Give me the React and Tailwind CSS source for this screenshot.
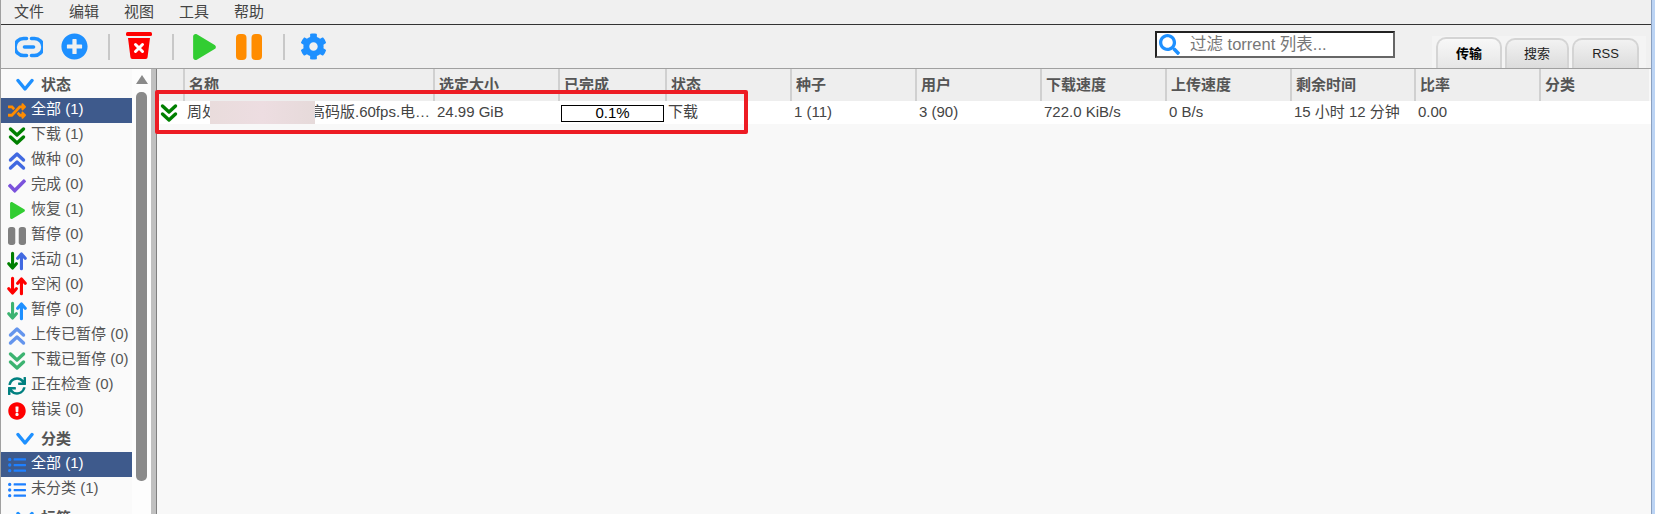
import React from 'react';
import {
  FaCheck,
  FaCog,
  FaExclamationCircle,
  FaListUl,
  FaPlay,
  FaPlusCircle,
  FaRandom,
  FaSearch,
  FaSync,
} from 'react-icons/fa';

const FONT = "font-['Liberation_Sans','Noto_Sans_CJK_SC',sans-serif]";
const COLS = 'grid grid-cols-[26px_250px_125px_107px_125px_125px_125px_125px_125px_124px_125px_110px]';

function DoubleChevron({ color, up, className = 'h-[20px] w-[18px]' }) {
  return (
    <svg viewBox="0 0 18 20" className={className} fill="none" stroke={color} strokeWidth="3.4" strokeLinecap="round" strokeLinejoin="round">
      {up ? <path d="M2.500 9 9 3l6.500 6M2.500 17 9 11l6.500 6" /> : <path d="M2.500 3 9 9l6.500-6M2.500 11 9 17l6.500-6" />}
    </svg>
  );
}

function Chevron() {
  return (
    <svg viewBox="0 0 18 14" className="mr-[7px] h-[14px] w-[18px]" fill="none" stroke="#1e90ff" strokeWidth="3.4" strokeLinecap="round" strokeLinejoin="round">
      <path d="M2 2.500 9 11l7-8.500" />
    </svg>
  );
}

function Pills({ color, className }) {
  return (
    <svg viewBox="0 0 26 26" className={className} fill={color}>
      <rect x="0" y="0" width="10.500" height="26" rx="4" />
      <rect x="15.500" y="0" width="10.500" height="26" rx="4" />
    </svg>
  );
}

function UpDown({ down, up }) {
  return (
    <svg viewBox="0 0 18 18" className="h-[20px] w-[20px]" fill="none" strokeWidth="2.8" strokeLinecap="round" strokeLinejoin="round">
      <path d="M5 2v13M1.600 11.400 5 15.400l3.400-4" stroke={down} />
      <path d="M13 16V3M9.600 6.600 13 2.600l3.400 4" stroke={up} />
    </svg>
  );
}

function LinkIcon() {
  return (
    <svg viewBox="0 0 28 24" className="h-[24px] w-[28px]" fill="none" stroke="#1e90ff" strokeWidth="3.600" strokeLinecap="round">
      <path d="M11.500 3.500H8.500a8.500 8.500 0 0 0 0 17h3" />
      <path d="M16.500 3.500h3a8.500 8.500 0 0 1 0 17h-3" />
      <path d="M9.500 12h9" />
    </svg>
  );
}

function TrashIcon() {
  return (
    <svg viewBox="0 0 26 27" className="h-[27px] w-[26px]">
      <rect x="0" y="0" width="26" height="4" rx="1.500" fill="#ff0000" />
      <path d="M2 6h22l-2.400 19a2 2 0 0 1-2 2H6.400a2 2 0 0 1-2-2z" fill="#ff0000" />
      <path d="M9.500 12.500l7 7M16.500 12.500l-7 7" stroke="#fff" strokeWidth="3" strokeLinecap="round" />
    </svg>
  );
}

function Separator() {
  return <div className="h-[26px] w-[2px] bg-[#c8c8c8]" />;
}

function SideRow({ icon, label, active }) {
  return (
    <div className={`flex h-[25px] items-center ${active ? 'bg-[#3e5a8c] text-white' : 'text-[#555]'}`}>
      <span className="flex w-[30px] shrink-0 justify-center pl-[2px]">{icon}</span>
      <span className="whitespace-nowrap pb-[2px]">{label}</span>
    </div>
  );
}

function SideHeader({ label }) {
  return (
    <div className="flex h-[29px] items-center pt-[3px] pl-[15px] font-bold text-[#555]">
      <Chevron />
      <span>{label}</span>
    </div>
  );
}

const statusRows = [
  { label: '全部 (1)', active: true, icon: <FaRandom className="h-[18px] w-[18px] text-[#ff8c00]" /> },
  { label: '下载 (1)', icon: <DoubleChevron color="#008000" /> },
  { label: '做种 (0)', icon: <DoubleChevron up color="#4169e1" /> },
  { label: '完成 (0)', icon: <FaCheck className="h-[18px] w-[18px] text-[#7b52dc]" /> },
  { label: '恢复 (1)', icon: <FaPlay className="h-[17px] w-[15px] text-[#32cd32]" /> },
  { label: '暂停 (0)', icon: <Pills color="#808080" className="h-[18px] w-[18px]" /> },
  { label: '活动 (1)', icon: <UpDown down="#008000" up="#4169e1" /> },
  { label: '空闲 (0)', icon: <UpDown down="#ff0000" up="#ff0000" /> },
  { label: '暂停 (0)', icon: <UpDown down="#3cb371" up="#1e90ff" /> },
  { label: '上传已暂停 (0)', icon: <DoubleChevron up color="#6495ed" /> },
  { label: '下载已暂停 (0)', icon: <DoubleChevron color="#3cb371" /> },
  { label: '正在检查 (0)', icon: <FaSync className="h-[18px] w-[18px] text-[#008080]" /> },
  { label: '错误 (0)', icon: <FaExclamationCircle className="h-[18px] w-[18px] text-[#ff0000]" /> },
];

const headers = ['名称', '选定大小', '已完成', '状态', '种子', '用户', '下载速度', '上传速度', '剩余时间', '比率', '分类'];
const tailCells = ['1 (11)', '3 (90)', '722.0 KiB/s', '0 B/s', '15 小时 12 分钟', '0.00', ''];

export default function App() {
  return (
    <div className={`relative flex h-[514px] w-[1655px] overflow-hidden bg-white text-[15px] ${FONT}`}>
      <div className="flex min-w-0 flex-1 flex-col border-r border-l border-r-[#8aa0c0] border-l-[#a0a0a0]">
        {/* menu */}
        <div className="flex h-[25px] shrink-0 items-center gap-[25px] border-b border-[#333] bg-[#f0f0f0] pl-[13px] text-[#444]">
          {['文件', '编辑', '视图', '工具', '帮助'].map((m) => (
            <span key={m}>{m}</span>
          ))}
        </div>

        {/* toolbar */}
        <div className="flex h-[44px] shrink-0 items-center border-b border-[#a0a0a0] bg-[#f0f0f0]">
          <div className="ml-[14px] flex items-center">
            <LinkIcon />
            <FaPlusCircle className="ml-[18px] h-[27px] w-[27px] text-[#1e90ff]" />
            <div className="ml-[20px]"><Separator /></div>
            <div className="ml-[16px] -mt-[2px]"><TrashIcon /></div>
            <div className="ml-[20px]"><Separator /></div>
            <FaPlay className="ml-[19px] h-[26px] w-[23px] text-[#32cd32]" />
            <Pills color="#ff8c00" className="ml-[20px] h-[26px] w-[26px]" />
            <div className="ml-[21px]"><Separator /></div>
            <FaCog className="ml-[15px] h-[27px] w-[27px] text-[#1e90ff]" />
          </div>
          <div className="ml-[828px] mt-[-5px] flex h-[27px] w-[240px] items-center border-2 border-t-[#222] border-r-[#666] border-b-[#666] border-l-[#222] bg-white pl-[2px] text-[16.5px] text-[#777]">
            <FaSearch className="h-[21px] w-[21px] text-[#1e90ff]" />
            <span className="ml-[10px]">过滤 torrent 列表...</span>
          </div>
          <div className="mt-[11px] ml-[37px] flex h-[32px] w-[214px] items-end gap-[3px] self-start bg-[#f4f4f4] pl-[4px] text-[13px] text-[#222]">
            <div className="flex h-[31px] w-[66px] items-center justify-center rounded-t-[10px] border-2 border-b-0 border-[#d4d4d4] bg-gradient-to-b from-[#f8f8f8] to-[#e6e6e6] font-bold text-black">
              传输
            </div>
            <div className="flex h-[30px] w-[64px] items-center justify-center rounded-t-[10px] border-2 border-b-0 border-[#d4d4d4] bg-gradient-to-b from-[#f2f2f2] to-[#dcdcdc]">
              搜索
            </div>
            <div className="flex h-[30px] w-[67px] items-center justify-center rounded-t-[10px] border-2 border-b-0 border-[#d4d4d4] bg-gradient-to-b from-[#f2f2f2] to-[#dcdcdc]">
              RSS
            </div>
          </div>
        </div>

        <div className="flex min-h-0 flex-1">
          {/* sidebar */}
          <div className="h-full w-[131px] shrink-0 overflow-hidden bg-[#fafafa]">
            <SideHeader label="状态" />
            {statusRows.map((r, i) => (
              <SideRow key={i} {...r} />
            ))}
            <SideHeader label="分类" />
            <SideRow active label="全部 (1)" icon={<FaListUl className="h-[18px] w-[18px] text-[#1e80ff]" />} />
            <SideRow label="未分类 (1)" icon={<FaListUl className="h-[18px] w-[18px] text-[#1e80ff]" />} />
            <SideHeader label="标签" />
          </div>

          {/* sidebar scrollbar */}
          <div className="w-[19px] shrink-0 bg-[#fdfdfd] pt-[6px] pl-[4px]">
            <div className="h-0 w-0 border-x-[6px] border-b-[9px] border-x-transparent border-b-[#8a8a8a]" />
            <div className="mt-[8px] h-[389px] w-[11px] rounded-[5px] bg-[#8a8a8a]" />
          </div>
          <div className="w-[6px] shrink-0 border-r border-[#808080] bg-[#c0c0c0]" />

          {/* transfer list */}
          <div className="min-w-0 flex-1 bg-[#f8f8f8]">
            <div className={`${COLS} h-[32px] w-[1492px] items-center bg-[#eeeeee] font-bold text-[#555]`}>
              <div className="h-full" />
              {headers.map((h) => (
                <div key={h} className="flex h-full items-center border-l-2 border-[#d0d0d0] pl-[4px]">
                  {h}
                </div>
              ))}
            </div>
            <div className={`${COLS} h-[23px] items-center bg-white text-[#444]`}>
              <DoubleChevron color="#008000" className="ml-[3px] h-[20px] w-[18px]" />
              <div className="flex h-full items-center overflow-hidden whitespace-nowrap pl-[4px]">
                <span>周处</span>
                <span className="relative z-10 -ml-[7px] inline-block h-[23px] w-[105px] shrink-0 bg-gradient-to-r from-[#e9dcdc] via-[#eddde1] to-[#e6dada]" />
                <span className="-ml-[5px]">高码版.60fps.电…</span>
              </div>
              <div className="pl-[4px]">24.99 GiB</div>
              <div className="pt-[1px] pl-[3px]">
                <div className="flex h-[17px] w-[103px] items-center justify-center border border-black bg-white text-black">
                  0.1%
                </div>
              </div>
              <div className="pl-[3px]">下载</div>
              {tailCells.map((c, i) => (
                <div key={i} className="whitespace-nowrap pl-[4px]">{c}</div>
              ))}
            </div>
          </div>
        </div>
      </div>
      <div className="w-[3px] shrink-0 bg-[#bcd4f4]" />

      {/* red annotation */}
      <div className="absolute top-[90px] left-[155px] h-[44px] w-[593px] rounded-[2px] border-[4px] border-[#ed1c24]" />
    </div>
  );
}
